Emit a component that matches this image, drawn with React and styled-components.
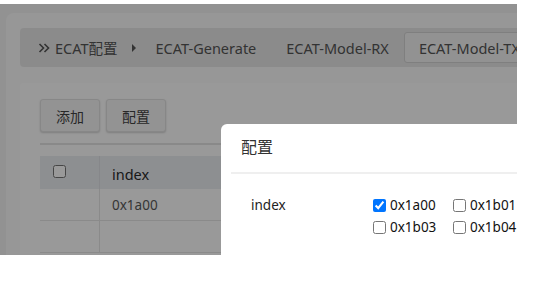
import React from "react";
import styled, { createGlobalStyle } from "styled-components";

const Global = createGlobalStyle`
  html, body { margin: 0; padding: 0; background: #fff; }
  body { font-family: "Noto Sans", "Noto Sans CJK SC", sans-serif; }
  * { box-sizing: border-box; }
`;

const Frame = styled.div`
  position: relative;
  margin-top: 4px;
  width: 517px;
  height: 251px;
  overflow: hidden;
  background: #f4f4f4;
`;

const Panel = styled.div`
  margin: 9px 0 0 6px;
  width: 600px;
  height: 300px;
  padding: 15px 0 0 14px;
  background: #fcfcfc;
  border-radius: 8px 0 0 0;
`;

const Breadcrumb = styled.div`
  display: flex;
  align-items: center;
  height: 39px;
  padding: 0 0 0 18px;
  background: #e8e8e8;
  border-radius: 4px;
  color: #555;
  font-size: 14.5px;
  white-space: nowrap;
`;

const Home = styled.span`
  display: flex;
  align-items: center;
  gap: 5px;
`;

const Caret = styled.span`
  width: 0;
  height: 0;
  margin: 0 5px 0 14px;
  border-top: 4px solid transparent;
  border-bottom: 4px solid transparent;
  border-left: 4px solid #555;
`;

const Tab = styled.span`
  display: flex;
  align-items: center;
  height: 31px;
  padding: 0 14px;
  border: 1px solid ${(p) => (p.$active ? "#d4d4d4" : "transparent")};
  border-radius: 3px;
  background: ${(p) => (p.$active ? "#f3f3f3" : "transparent")};
`;

const Card = styled.div`
  margin-top: 16px;
  padding: 16px 20px 0 20px;
  height: 200px;
  background: #ffffff;
  border-radius: 4px 0 0 0;
`;

const Toolbar = styled.div`
  display: flex;
  gap: 6px;
`;

const Button = styled.button`
  width: 60px;
  height: 33px;
  border: 1px solid #e2e2e2;
  border-radius: 3px;
  background: #f6f6f6;
  box-shadow: 0 1px 2px rgba(0, 0, 0, 0.18);
  color: #444;
  font-family: "Noto Sans CJK SC", sans-serif;
  font-size: 14px;
  padding: 0;
`;

const Rule = styled.div`
  height: 2px;
  margin-top: 11px;
  background: #e4e4e4;
`;

const Table = styled.div`
  margin-top: 11px;
  display: grid;
  grid-template-columns: 60px 1fr;
  font-size: 13.5px;
`;

const HeadCell = styled.div`
  display: flex;
  align-items: center;
  height: 33px;
  padding-left: ${(p) => (p.$check ? "13px" : "12px")};
  padding-bottom: ${(p) => (p.$check ? "2px" : "0")};
  padding-top: ${(p) => (p.$check ? "0" : "2px")};
  background: #eceef2;
  border-right: ${(p) => (p.$check ? "1px solid #e0e2e6" : "none")};
  color: #2a2a2a;
  font-size: 14.5px;
`;

const Cell = styled.div`
  display: flex;
  align-items: center;
  height: 32px;
  padding-left: 12px;
  padding-top: 1px;
  border-bottom: 1px solid #e6e6e6;
  border-right: ${(p) => (p.$check ? "1px solid #e6e6e6" : "none")};
  color: #5a5a5a;
`;

const Box = styled.input`
  width: 13px;
  height: 13px;
  margin: 0;
`;

const Overlay = styled.div`
  position: absolute;
  inset: 0;
  background: rgba(0, 0, 0, 0.4);
`;

const Modal = styled.div`
  position: absolute;
  left: 221px;
  top: 120px;
  width: 340px;
  height: 200px;
  background: #fff;
  border-radius: 6px 0 0 0;
`;

const ModalHeader = styled.div`
  display: flex;
  align-items: center;
  height: 48px;
  padding: 0 0 4px 20px;
  font-family: "Noto Sans CJK SC", sans-serif;
  font-size: 16px;
  color: #333;
`;

const Divider = styled.div`
  height: 2px;
  margin: 0 10px;
  background: #efefef;
`;

const FormRow = styled.div`
  display: grid;
  grid-template-columns: 122px 1fr;
  padding: 20px 0 0 30px;
  font-size: 13.5px;
  color: #222;
`;

const Label = styled.div`
  height: 22px;
  display: flex;
  align-items: center;
`;

const Options = styled.div`
  display: grid;
  grid-template-columns: 80px 80px;
  grid-auto-rows: 22px;
`;

const Option = styled.label`
  display: flex;
  align-items: center;
  gap: 4px;
  color: #111;
`;

const Chevrons = () => (
  <svg width="12" height="12" viewBox="0 0 12 12" fill="none" stroke="#555" strokeWidth="1.6">
    <path d="M1.5 2 L5.5 6 L1.5 10" />
    <path d="M6.5 2 L10.5 6 L6.5 10" />
  </svg>
);

const options = [
  { v: "0x1a00", checked: true },
  { v: "0x1b01" },
  { v: "0x1b03" },
  { v: "0x1b04" },
];

export default function App() {
  return (
    <>
      <Global />
      <Frame>
        <Panel>
          <Breadcrumb>
            <Home>
              <Chevrons />
              <span>ECAT配置</span>
            </Home>
            <Caret />
            <Tab>ECAT-Generate</Tab>
            <Tab>ECAT-Model-RX</Tab>
            <Tab $active>ECAT-Model-TX</Tab>
          </Breadcrumb>
          <Card>
            <Toolbar>
              <Button>添加</Button>
              <Button>配置</Button>
            </Toolbar>
            <Rule />
            <Table>
              <HeadCell $check>
                <Box type="checkbox" readOnly />
              </HeadCell>
              <HeadCell>index</HeadCell>
              <Cell $check />
              <Cell>0x1a00</Cell>
              <Cell $check />
              <Cell />
            </Table>
          </Card>
        </Panel>
        <Overlay />
        <Modal>
          <ModalHeader>配置</ModalHeader>
          <Divider />
          <FormRow>
            <Label>index</Label>
            <Options>
              {options.map((o) => (
                <Option key={o.v}>
                  <Box type="checkbox" defaultChecked={!!o.checked} />
                  {o.v}
                </Option>
              ))}
            </Options>
          </FormRow>
        </Modal>
      </Frame>
    </>
  );
}
